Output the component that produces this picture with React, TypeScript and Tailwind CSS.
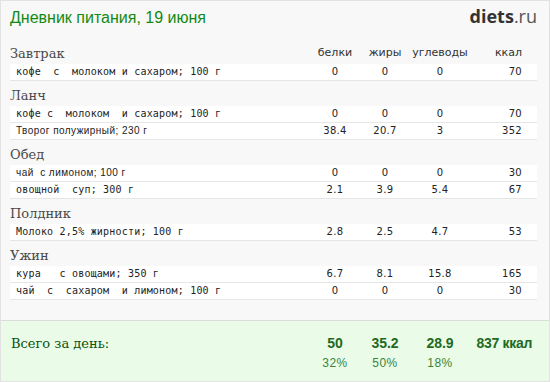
import React from 'react';

type Food = { name: string; p: string; f: string; c: string; kcal: string; prop?: boolean };
type Meal = { title: string; items: Food[] };

const meals: Meal[] = [
  { title: 'Завтрак', items: [{ name: 'кофе  с  молоком и сахаром; 100 г', p: '0', f: '0', c: '0', kcal: '70' }] },
  {
    title: 'Ланч',
    items: [
      { name: 'кофе с  молоком  и сахаром; 100 г', p: '0', f: '0', c: '0', kcal: '70' },
      { name: 'Творог полужирный; 230 г', p: '38.4', f: '20.7', c: '3', kcal: '352', prop: true },
    ],
  },
  {
    title: 'Обед',
    items: [
      { name: 'чай  с лимоном; 100 г', p: '0', f: '0', c: '0', kcal: '30', prop: true },
      { name: 'овощной  суп; 300 г', p: '2.1', f: '3.9', c: '5.4', kcal: '67' },
    ],
  },
  { title: 'Полдник', items: [{ name: 'Молоко 2,5% жирности; 100 г', p: '2.8', f: '2.5', c: '4.7', kcal: '53' }] },
  {
    title: 'Ужин',
    items: [
      { name: 'кура   с овощами; 350 г', p: '6.7', f: '8.1', c: '15.8', kcal: '165' },
      { name: 'чай  с  сахаром  и лимоном; 100 г', p: '0', f: '0', c: '0', kcal: '30' },
    ],
  },
];

const serif = "font-['DejaVu_Serif',serif]";
const sans = "font-['DejaVu_Sans',sans-serif]";

const MealBlock: React.FC<{ meal: Meal; first: boolean }> = ({ meal, first }) => (
  <div>
    <div className="h-[25px] flex items-end pb-[2px]">
      <div className={`flex-1 ${serif} text-[13px] leading-[17px] text-[#4a4a4a]`}>{meal.title}</div>
      {first && (
        <div className={`flex items-end ${sans} text-[11px] leading-[17px] text-[#333] pr-[15px] pb-[1px]`}>
          <span className="w-[50px] text-center">белки</span>
          <span className="w-[50px] text-center">жиры</span>
          <span className="w-[60px] text-center">углеводы</span>
          <span className="w-[52px] text-right">ккал</span>
        </div>
      )}
    </div>
    {meal.items.map((it, i) => (
      <div
        key={i}
        className={`h-[17px] flex bg-white border-b border-[#e6e6e6] ${sans} text-[10px] leading-[16px] text-[#222] pr-[15px]`}
      >
        <span
          className={
            it.prop
              ? "flex-1 pl-[6px] whitespace-pre font-['Liberation_Sans',sans-serif] tracking-[0.45px]"
              : "flex-1 pl-[6px] whitespace-pre font-['DejaVu_Sans_Mono',monospace] tracking-[0.2px]"
          }
        >
          {it.name}
        </span>
        <span className="w-[50px] text-center tracking-[0.3px]">{it.p}</span>
        <span className="w-[50px] text-center tracking-[0.3px]">{it.f}</span>
        <span className="w-[60px] text-center tracking-[0.3px]">{it.c}</span>
        <span className="w-[52px] text-right tracking-[0.3px]">{it.kcal}</span>
      </div>
    ))}
  </div>
);

export default function App() {
  return (
    <div className="w-[550px] h-[382px] bg-[#f8f8f8] border border-[#e2e2e2] flex flex-col overflow-hidden">
      <div className="h-[38px] flex justify-between items-start pl-[9px] pr-[12px] pt-[6px]">
        <h1 className="font-['Liberation_Sans',sans-serif] text-[16px] leading-[21px] text-[#138a13]">
          Дневник питания, 19 июня
        </h1>
        <div className="font-['Open_Sans',sans-serif] text-[18px] leading-[21px] text-[#333] -mt-[1px]">
          <span className="font-bold">diets</span>
          <span className="text-[#555]">.ru</span>
        </div>
      </div>
      <div className="flex-1 pl-[9px] pr-[12px]">
        {meals.map((m, i) => (
          <MealBlock key={m.title} meal={m} first={i === 0} />
        ))}
      </div>
      <div className="h-[61px] border-t border-[#dcdcdc] bg-[#eafbe8] pl-[10px] pr-[17px] pt-[14px] font-['Liberation_Sans',sans-serif]">
        <div className="flex items-baseline h-[17px] leading-[17px]">
          <span className={`flex-1 ${serif} text-[13px] text-[#0d520d]`}>Всего за день:</span>
          <span className="w-[50px] text-center text-[14px] font-bold text-[#1f6a1f]">50</span>
          <span className="w-[50px] text-center text-[14px] font-bold text-[#1f6a1f]">35.2</span>
          <span className="w-[60px] text-center text-[14px] font-bold text-[#1f6a1f]">28.9</span>
          <span className="w-[62px] text-right text-[14px] font-bold text-[#1f6a1f] tracking-[-0.3px]">837 ккал</span>
        </div>
        <div className="flex mt-[3px] h-[17px] leading-[17px] text-[12px] text-[#3a843a] tracking-[0.5px]">
          <span className="flex-1" />
          <span className="w-[50px] text-center">32%</span>
          <span className="w-[50px] text-center">50%</span>
          <span className="w-[60px] text-center">18%</span>
          <span className="w-[62px]" />
        </div>
      </div>
    </div>
  );
}
